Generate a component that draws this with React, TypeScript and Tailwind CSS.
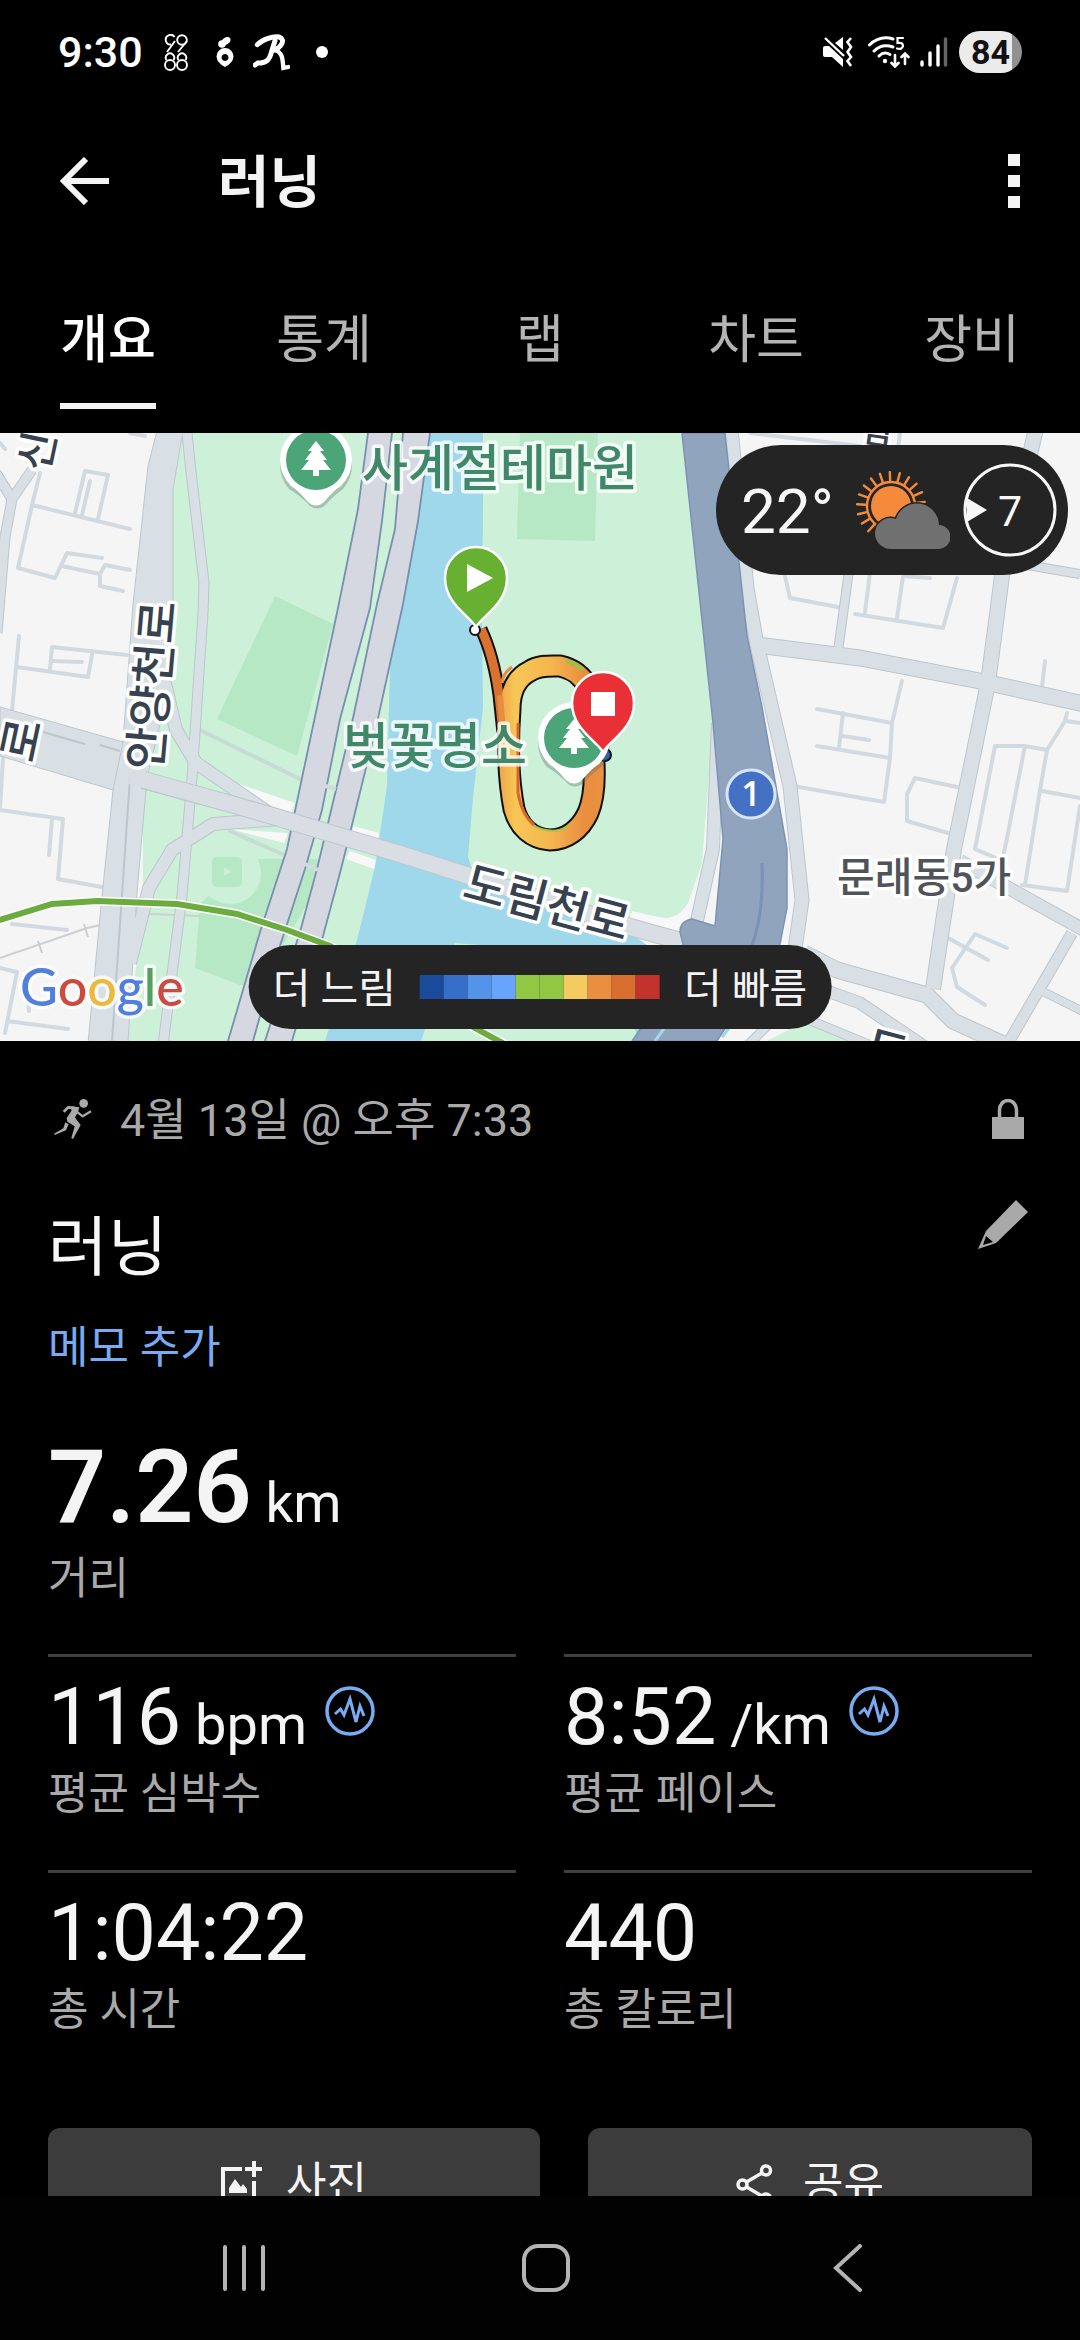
import type { ReactNode } from "react";

const MUTED = "#a9a9a9";

/* ---------- status bar ---------- */

function NinesEightsIcon() {
  return (
    <svg width="24" height="37" viewBox="0 0 24 37" fill="none" stroke="white" strokeWidth="1.900">
      <path d="M10.500 3 A4.800 4.800 0 1 0 7 10.500 M11 7 L3 18" />
      <circle cx="18" cy="6" r="4.800" />
      <path d="M23 7 L14 18" />
      <circle cx="6" cy="31" r="5" />
      <circle cx="18" cy="31" r="5" />
      <path d="M2.500 26 A4.200 4.200 0 1 1 9.500 26 M14.500 26 A4.200 4.200 0 1 1 21.500 26" />
    </svg>
  );
}

function SproutIcon() {
  return (
    <svg width="18" height="30" viewBox="0 0 18 30">
      <circle cx="6" cy="7" r="3.800" fill="white" />
      <ellipse cx="10" cy="4" rx="5" ry="3.500" fill="white" transform="rotate(-35 10 4)" />
      <path
        d="M9 11 A8.500 8.500 0 0 1 17.500 19.500 Q17 26 9 30 Q1 26 .5 19.500 A8.500 8.500 0 0 1 9 11 Z M9 17 a3.500 3.500 0 1 0 .01 0 Z"
        fill="white"
        fillRule="evenodd"
      />
    </svg>
  );
}

function RunnerLetterIcon() {
  return (
    <svg width="37" height="37" viewBox="0 0 111 111" fill="none" stroke="white" strokeLinecap="round">
      <path d="M13 32 C27 17 58 6 78 9 C100 16 84 42 62 48" strokeWidth="15" />
      <path d="M66 20 L56 52 C50 80 38 87 14 87 L6 93" strokeWidth="15" />
      <path d="M64 48 C90 54 89 78 91 102 L106 99" strokeWidth="13" />
    </svg>
  );
}

function MuteVibrateIcon() {
  return (
    <svg width="32" height="30" viewBox="0 0 32 30" fill="white">
      <path d="M0 11 Q0 9 2 9 H6 L20 22 V30 L9 20 H2 Q0 20 0 18 Z" />
      <path d="M12 6 L20 0 V13 Z" />
      <path d="M2 1 L21 19" stroke="white" strokeWidth="2.400" />
      <path d="M28 1 L24.500 5 L28 10 L24.500 15 L28 20 L24.500 24 L28 29" stroke="white" strokeWidth="2.600" fill="none" />
    </svg>
  );
}

function WifiIcon() {
  return (
    <svg width="42" height="32" viewBox="0 0 42 32" fill="none" stroke="white" strokeLinecap="round">
      <path d="M1.500 9 Q12 -1 25 3" strokeWidth="3" />
      <path d="M6 15 Q14 7 25 11" strokeWidth="3" />
      <path d="M11 20 Q16 15 22 18.500" strokeWidth="3" />
      <circle cx="17" cy="25" r="2.200" fill="white" stroke="none" />
      <path d="M35 2 H29.500 V7 Q35 6 35 10 Q34 14 29 12.500" strokeWidth="2.200" />
      <path d="M27 19 V30 M23.500 27 L27 30.500 L30.500 27" strokeWidth="2.600" />
      <path d="M37 28 V18 M33.500 21 L37 17.500 L40.500 21" strokeWidth="2.600" />
    </svg>
  );
}

function SignalIcon() {
  return (
    <svg width="28" height="30" viewBox="0 0 28 30" strokeLinecap="round" strokeWidth="3.400">
      <path d="M2 25 V28 M10 16 V28 M18 9 V28" stroke="white" />
      <path d="M25.500 2 V28" stroke="#666" />
    </svg>
  );
}

function StatusBar() {
  return (
    <div className="flex h-[104px] shrink-0 items-center px-[58px] text-white">
      <span className="w-[106px] text-[43px] font-medium leading-none">9:30</span>
      <NinesEightsIcon />
      <div className="w-[28px]" />
      <SproutIcon />
      <div className="w-[19px]" />
      <RunnerLetterIcon />
      <span className="ml-[26px] size-3 rounded-full bg-white" />
      <div className="ml-auto flex items-center">
        <MuteVibrateIcon />
        <div className="w-[13px]" />
        <WifiIcon />
        <div className="w-[10px]" />
        <SignalIcon />
        <span className="ml-[11px] flex h-[42px] w-[63px] items-center justify-center rounded-[21px] bg-[linear-gradient(to_right,#ebebeb_84%,#919191_84%)] text-[34px] font-bold leading-none text-[#111]">
          84
        </span>
      </div>
    </div>
  );
}

/* ---------- header ---------- */

function AppBar() {
  return (
    <header className="flex h-[154px] shrink-0 items-center px-[60px]">
      <button aria-label="뒤로" className="w-[158px]">
        <svg width="49" height="48" viewBox="0 0 49 48" fill="none" stroke="#f4f4f4" strokeWidth="6">
          <path d="M49 24 H5 M26 2 L4 24 L26 46" />
        </svg>
      </button>
      <h1 className="pt-1 text-[56px] font-semibold leading-[64px] text-[#f4f4f4]">러닝</h1>
      <button aria-label="더보기" className="ml-auto flex flex-col gap-[9px]">
        <span className="size-3 bg-[#f4f4f4]" />
        <span className="size-3 bg-[#f4f4f4]" />
        <span className="size-3 bg-[#f4f4f4]" />
      </button>
    </header>
  );
}

const tabs = ["개요", "통계", "랩", "차트", "장비"];

function Tabs() {
  return (
    <nav className="grid shrink-0 grid-cols-5 pb-6 pt-[51px]">
      {tabs.map((t, i) => (
        <button key={t} className="flex flex-col items-center">
          <span
            className={
              i === 0
                ? "border-b-[6px] border-[#f4f4f4] pb-[30px] text-[52px] font-medium leading-[64px] text-white"
                : "border-b-[6px] border-transparent pb-[30px] text-[52px] leading-[64px] text-[#b4b4b4]"
            }
          >
            {t}
          </span>
        </button>
      ))}
    </nav>
  );
}

/* ---------- map ---------- */

const smallStreets = [
  "M40 40 L32 72 L18 135 L55 145 L67 120 L102 125",
  "M32 72 L130 96",
  "M75 80 L85 38 L108 42 L98 86 M90 48 L82 82",
  "M62 133 L100 141 L105 132 L130 137 M100 141 V153 L123 158",
  "M19 203 L12 278 M17 234 L88 244 L92 222 M50 236 L52 214 L127 222 M53 228 L82 229",
  "M3 325 L0 377 L63 386 L58 446 L102 454 M52 386 L49 422",
  "M12 491 L67 497 M0 535 L17 539 L5 600 M7 588 L68 596",
  "M130 0 L145 3 M0 10 L5 16 M28 566 L29 578",
  "M785 143 L790 165 L843 175",
  "M855 181 L943 195 L957 145 M870 140 L865 179 M903 143 L897 185 M903 143 L930 145",
  "M817 276 L892 290 M902 248 L892 290 L890 325 L884 369 L793 353 M817 313 L890 325 M843 280 L839 315 M843 303 L869 307",
  "M957 354 L915 345 L907 361 V388 L948 400",
  "M1045 228 L1042 254",
  "M1067 280 L1065 288 L1047 317 L1040 357 L1025 452 M1065 288 L1080 290 M1047 317 L1025 313 L995 313 L975 416 L1003 428 M1025 313 L1003 425 M1022 452 L1067 458 L1080 373 M1042 358 L1080 365",
  "M948 505 L988 527 M1007 515 L975 501 L952 535 L957 554 L985 572",
  "M750 0 L860 13 M900 0 L895 40",
];

const edge = "#bcc6cd";
const road = "#d9e0e5";

const arterials: { d: string; w: number }[] = [
  { d: "M32 37 L12 66 L-4 40 M12 66 L5 104 L-3 200", w: 9 },
  { d: "M187 0 L190 30 L204 150 L203 180 L192 345 L182 463 L163 612", w: 9 },
  { d: "M165 250 L176 297 L196 330 L275 384", w: 12 },
  { d: "M280 386 L213 391 L172 417 L149 455 L130 530", w: 12 },
  { d: "M850 130 L838 218", w: 8 },
  { d: "M1036 -4 L1003 135 L988 250 L954 416 L933 556", w: 14 },
  { d: "M1003 128 L1080 141", w: 8 },
  { d: "M757 212 L860 225 L980 248 L1084 271", w: 15 },
  { d: "M804 520 L837 537 L927 562 L953 588 L1010 614", w: 15 },
  { d: "M800 548 L860 570 L925 614", w: 11 },
  { d: "M780 575 L870 612 M740 620 L775 585", w: 8 },
  { d: "M960 428 L1084 497", w: 12 },
  { d: "M1072 500 L1007 612", w: 10 },
  { d: "M1042 558 L1084 579", w: 7 },
  { d: "M731 -4 L747 155 L757 212 L790 353 L802 467 L793 530", w: 13 },
  { d: "M718 290 L713 416 L696 492", w: 12 },
];

const highwayA = "M368 0 L358 76 L338 175 L302 345 L287 416 L260 499 L228 608";
const highwayAEast = "M392 0 L382 88 L370 175 L340 286 L322 377 L305 436 L278 519 L253 608";
const highwayB = "M403 0 L395 96 L377 171 L352 290 L335 361 L317 436 L300 499 L265 608";
const highwayBEast = "M430 0 L418 88 L403 171 L377 290 L350 400 L340 440 L323 503 L292 608";

const routeLoop =
  "M510 276 C510 256 518 244 530 238 C539 232 550 233 560 233 C574 236 582 243 588 254 C593 274 594 300 594 330 C595 350 594 366 588 380 C580 397 566 407 550 407 C532 406 519 394 514 376 C509 350 507 315 510 276 Z";
const routeTail = "M481 196 C490 215 496 240 499 262 L503 300";

function MapPin({ x, y, fill, children }: { x: number; y: number; fill: string; children: ReactNode }) {
  return (
    <g transform={`translate(${x} ${y})`}>
      <path d="M0 47 C-6 36 -31 24 -31 -2 A31 31 0 0 1 31 -2 C31 24 6 36 0 47 Z" fill={fill} stroke="white" strokeWidth="2.500" />
      {children}
    </g>
  );
}

function ParkMarker({ x, y }: { x: number; y: number }) {
  return (
    <g transform={`translate(${x} ${y})`}>
      <path d="M-27 26 A36 36 0 1 1 27 26 Q20 31 13 38 Q4 50 -6 43 Q-14 34 -27 26 Z" fill="#5b6b64" opacity=".35" transform="translate(0 3)" />
      <path d="M-25 26 A36 36 0 1 1 25 26 Q17 31 9 41 Q0 50 -9 41 Q-17 31 -25 26 Z" fill="white" />
      <circle r="30" fill="#4ba578" />
      <path d="M0 -19 L8 -9 H4 L11 0 H7 L15 10 H3 V16 H-3 V10 H-15 L-7 0 H-11 L-4 -9 H-8 Z" fill="white" />
    </g>
  );
}

function MapDrawing() {
  return (
    <svg
      className="absolute inset-0 size-full"
      viewBox="0 0 1080 608"
      preserveAspectRatio="xMidYMid slice"
      fill="none"
      role="img"
      aria-label="러닝 경로 지도"
    >
      <defs>
        <linearGradient id="pace" x1="500" y1="0" x2="605" y2="0" gradientUnits="userSpaceOnUse">
          <stop offset="0" stopColor="#f0a84a" />
          <stop offset=".15" stopColor="#f7c756" />
          <stop offset=".5" stopColor="#f4b44e" />
          <stop offset=".8" stopColor="#e98f40" />
          <stop offset="1" stopColor="#e8913f" />
        </linearGradient>
      </defs>
      <rect width="1080" height="608" fill="#f6f5f6" />

      <path d="M183 0 H683 L713 290 L702 430 L688 470 Q680 484 667 485 L630 480 L640 608 H128 L143 470 V345 L173 200 V56 Z" fill="#ccf0d8" />
      <g fill="#b6e8c5">
        <path d="M275 163 L333 191 L297 323 L217 286 Z" />
        <path d="M520 0 H598 L595 108 L517 106 Z" />
        <path d="M250 426 H335 L258 552 H240 L195 535 L200 471 Z" />
      </g>
      <circle cx="230" cy="440" r="31" fill="#ccf0d8" />
      <rect x="212" y="424" width="30" height="30" rx="5" fill="#b6e8c5" />
      <path d="M224 434 L231 439 L224 443 Z" fill="#ccf0d8" />
      <path d="M767 608 L810 586 L857 608 Z" fill="#ccf0d8" />

      <path
        d="M430 0 H483 V70 L482 195 L483 274 L473 365 L468 424 L475 446 L630 500 L672 530 L655 608 H640 L610 540 L480 512 L455 510 L421 608 H325 L357 507 L375 434 L387 353 L390 234 L403 171 Z"
        fill="#9fd8ea"
      />
      <path d="M233 349 L295 370 L290 383 L262 377 Z M230 396 L288 400 L284 410 Z M354 393 L379 400 L377 412 L350 405 Z M350 418 L376 427 L374 436 L346 426 Z" fill="#f8f8f8" />
      <path d="M632 478 L665 486 L690 478 L684 500 L630 490 Z" fill="#f8f8f8" />
      <path d="M715 290 L726 420 L712 495 L700 490 L712 420 Z" fill="#f4f4f6" />

      <g stroke="#d2dae1" strokeWidth="4" strokeLinecap="round" strokeLinejoin="round">
        {smallStreets.map((d) => (
          <path key={d} d={d} />
        ))}
        <path d="M200 297 L302 347 M230 398 L282 421" stroke="#c6dcd4" />
      </g>
      <path d="M0 525 L87 495 L150 481 L200 483 M38 508 L42 520 M84 491 L88 504" stroke="#ccd0d3" strokeWidth="2" />

      {arterials.map((a) => (
        <path key={a.d} d={a.d} stroke={edge} strokeWidth={a.w + 2} strokeLinejoin="round" />
      ))}
      <path d="M0 274 L123 309 L147 339 L143 357 L113 357 L0 323 Z" fill={road} stroke={edge} />
      <path d="M157 -2 L148 33 L133 171 L123 309 L113 357 L102 463 L88 610 H128 L137 460 L147 345 L170 250 L173 167 V56 L183 -2 Z" fill={road} stroke={edge} />
      <path d="M130 345 L112 608 M43 299 L85 311 M100 312 L120 318" stroke={edge} strokeWidth="2" />
      {arterials.map((a) => (
        <path key={a.d} d={a.d} stroke={road} strokeWidth={a.w} strokeLinejoin="round" />
      ))}

      <path d={`${highwayA} H253 L278 519 L305 436 L322 377 L340 286 L370 175 L382 88 L392 0 Z`} fill="#d5d8e1" />
      <path d={`${highwayB} H292 L323 503 L340 440 L350 400 L377 290 L403 171 L418 88 L430 0 Z`} fill="#d5d8e1" />
      <path d={`${highwayA} ${highwayAEast} ${highwayB} ${highwayBEast}`} stroke="#7690ae" strokeWidth="1.800" />
      <path d="M322 352 L336 356 M305 431 L318 437" stroke="#d2dae1" strokeWidth="4" />

      <path d="M143 347 L231 371 L276 384 L400 421 L630 494 L684 509" stroke={edge} strokeWidth="18" />
      <path d="M130 343 L231 371 L276 384 L400 421 L630 494 L684 509" stroke="#d9dee4" strokeWidth="16" />

      <path
        d="M682 0 L713 290 L723 406 L715 493 L692 486 Q680 488 680 499 L684 515 L672 550 L632 608 H717 L780 511 L787 475 V416 L762 274 L747 203 L725 0 Z"
        fill="#90a4be"
        stroke="#7b93b2"
        strokeWidth="1.500"
      />
      <path d="M762 430 Q764 480 752 512" stroke="#7a92b3" strokeWidth="3" />
      <path d="M655 608 L668 590 M722 604 L730 594" stroke="#9fd8ea" strokeWidth="3" />

      <path d="M-4 488 L52 471 L97 468 L177 471 L237 481 L287 497 L330 513 L473 594 L510 614" stroke="white" strokeWidth="9" />
      <path d="M-4 488 L52 471 L97 468 L177 471 L237 481 L287 497 L330 513 L473 594 L510 614" stroke="#6cab3f" strokeWidth="6" />

      <g strokeLinejoin="round">
        <path d={routeTail} stroke="#111" strokeWidth="13" />
        <path d={routeLoop} stroke="#111" strokeWidth="23" />
        <path d={routeTail} stroke="#d9712f" strokeWidth="9" />
        <path d={routeLoop} stroke="url(#pace)" strokeWidth="19" />
        <path d="M518 290 L518 360 Q522 382 534 392" stroke="#d9652f" strokeWidth="3" />
        <path d="M534 393 Q552 402 568 394" stroke="#a9c04a" strokeWidth="2" />
        <path d="M566 227 L583 236" stroke="#9cbf48" strokeWidth="4" />
        <path d="M502 250 Q503 240 512 234" stroke="#e88c3e" strokeWidth="3" />
        <path d="M500 262 L503 300" stroke="#e88c3e" strokeWidth="6" />
      </g>
      <circle cx="475" cy="197" r="5" fill="white" stroke="#111" strokeWidth="2" />
      <circle cx="605" cy="322" r="6" fill="#2b61b4" stroke="#111" strokeWidth="2" />

      <ParkMarker x={316} y={27} />
      <ParkMarker x={574} y={305} />

      <g
        stroke="white"
        strokeWidth="7"
        strokeLinejoin="round"
        paintOrder="stroke"
        className="font-['Roboto','Noto_Sans_CJK_KR',sans-serif] font-medium"
      >
        <g fill="#3f8868" strokeOpacity=".8" fontSize="50">
          <text x="362" y="53">사계절테마원</text>
          <text x="343" y="331">벚꽃명소</text>
        </g>
        <g fill="#36424f" fontSize="46">
          <text transform="translate(161 338) rotate(-85)">안양천로</text>
          <text transform="translate(461 464) rotate(15)">도림천로</text>
          <text transform="translate(33 331) rotate(-78)">로</text>
          <text transform="translate(48 40) rotate(-78)" fontSize="42">신</text>
          <text transform="translate(862 628) rotate(15)">도</text>
          <text transform="translate(860 8) rotate(8)" fontSize="34">림</text>
        </g>
        <text x="837" y="459" fontSize="41" fill="#505459">문래동5가</text>
      </g>

      <circle cx="751" cy="361" r="24" fill="#4471c4" stroke="#d8e4f8" strokeWidth="3" />
      <text x="751" y="373" fontSize="34" textAnchor="middle" fill="white" className="font-['Open_Sans',sans-serif] font-semibold">
        1
      </text>

      <MapPin x={476} y={147} fill="#67b032">
        <path d="M-9 -16 L17 -2 L-9 12 Z" fill="white" />
      </MapPin>
      <MapPin x={603} y={272} fill="#ea3037">
        <rect x="-12" y="-13" width="24" height="24" fill="white" />
      </MapPin>

      <text
        x="20"
        y="573"
        fontSize="52"
        stroke="white"
        strokeOpacity=".8"
        strokeWidth="7"
        strokeLinejoin="round"
        paintOrder="stroke"
        className="font-['Lato',sans-serif] font-medium"
      >
        <tspan fill="#527ee0">G</tspan>
        <tspan fill="#cb4b40">o</tspan>
        <tspan fill="#eab93d">o</tspan>
        <tspan fill="#527ee0">g</tspan>
        <tspan fill="#55a05e">l</tspan>
        <tspan fill="#cb4b40">e</tspan>
      </text>
    </svg>
  );
}

const rays = Array.from({ length: 14 }, (_, i) => 7 + i * 17);

function WeatherIcon() {
  return (
    <svg width="94" height="78" viewBox="0 0 94 78" fill="none">
      {rays.map((a) => {
        const c = Math.cos((a * Math.PI) / 180);
        const s = -Math.sin((a * Math.PI) / 180);
        return (
          <line
            key={a}
            x1={35 + 25 * c}
            y1={35 + 25 * s}
            x2={35 + 34 * c}
            y2={35 + 34 * s}
            stroke="#f58a3c"
            strokeWidth="2.400"
            strokeLinecap="round"
          />
        );
      })}
      <circle cx="35" cy="35" r="24" stroke="#f58a3c" strokeWidth="2.400" />
      <circle cx="35" cy="35" r="20" fill="#f58a3c" />
      <path
        d="M34 78 A15.500 15.500 0 1 1 40 48 A22 22 0 0 1 83 54 A12 12 0 0 1 82 78 Z"
        fill="#707070"
        stroke="#242424"
        strokeWidth="3"
        paintOrder="stroke"
      />
    </svg>
  );
}

function WindDial() {
  return (
    <svg width="94" height="94" viewBox="0 0 94 94" fill="none">
      <circle cx="47" cy="47" r="45" stroke="#f7f7f7" strokeWidth="3" />
      <path d="M4 35 L24 47 L4 59 Z" fill="#f7f7f7" />
      <text x="47" y="63" fontSize="43" textAnchor="middle" fill="#f7f7f7">
        7
      </text>
    </svg>
  );
}

const paceScale = [
  "bg-[#1c4a9a]",
  "bg-[#356fc8]",
  "bg-[#5393ea]",
  "bg-[#66a5fb]",
  "bg-[#90c843]",
  "bg-[#90c843]",
  "bg-[#f3cb60]",
  "bg-[#ea8e40]",
  "bg-[#d96f2e]",
  "bg-[#c1332c]",
];

function MapPanel() {
  return (
    <section className="relative h-[608px] shrink-0 overflow-hidden">
      <MapDrawing />
      <div className="absolute right-3 top-3 flex h-[130px] items-center rounded-full bg-[#242424] pl-[25px] pr-[11px] text-[#f7f7f7]">
        <span className="w-[115px] pt-1 text-[62px] leading-none">22°</span>
        <WeatherIcon />
        <div className="w-[13px]" />
        <WindDial />
      </div>
      <div className="absolute bottom-3 left-1/2 flex h-[84px] -translate-x-1/2 items-center gap-6 whitespace-nowrap rounded-full bg-[#242424] px-6 text-[41px] text-[#f4f4f4]">
        <span className="pt-1 leading-none">더 느림</span>
        <div className="flex">
          {paceScale.map((c, i) => (
            <span key={i} className={`h-6 w-6 ${c}`} />
          ))}
        </div>
        <span className="pt-1 leading-none">더 빠름</span>
      </div>
    </section>
  );
}

/* ---------- details ---------- */

function RunningIcon() {
  return (
    <svg width="38" height="40" viewBox="0 0 114 120" fill="none" stroke={MUTED} strokeLinejoin="round">
      <circle cx="89" cy="13" r="13" fill={MUTED} stroke="none" />
      <path d="M29 38 L43 25 L62 27" strokeWidth="8" />
      <path d="M52 22 L76 25 L72 40 L60 60 L38 58 L52 36 Z" fill={MUTED} stroke="none" />
      <path d="M68 38 L86 52 L111 37" strokeWidth="7" />
      <path d="M38 56 L60 52 L80 78 L57 120 L52 117 L62 82 L40 68 Z" fill={MUTED} stroke="none" />
      <path d="M34 70 L44 76 L36 94 L2 108 L0 104 L28 88 Z" fill={MUTED} stroke="none" />
    </svg>
  );
}

function LockIcon() {
  return (
    <svg width="32" height="40" viewBox="0 0 32 40" fill="none" role="img" aria-label="비공개">
      <path d="M7.500 20 V11 A8.500 9.500 0 0 1 24.500 11 V20" stroke={MUTED} strokeWidth="3.500" />
      <rect y="18" width="32" height="22" fill={MUTED} />
    </svg>
  );
}

function PencilIcon() {
  return (
    <svg width="50" height="49" viewBox="0 0 50 49">
      <path d="M38 0 L50 12 L18 43 L0 49 L8 31 Z M8 36 L15 42 L5 45 Z" fill={MUTED} fillRule="evenodd" />
    </svg>
  );
}

function PulseIcon() {
  return (
    <svg width="50" height="50" viewBox="0 0 50 50" fill="none" stroke="#78abf0">
      <circle cx="25" cy="25" r="23" strokeWidth="3.500" />
      <path d="M10 28 L15.500 23 L19 29 L25 13 L31 36 L35 20 L39 30" strokeWidth="3" />
    </svg>
  );
}

function Stat({ value, unit, label, pulse }: { value: string; unit?: string; label: string; pulse?: boolean }) {
  return (
    <div className="h-[216px] border-t-[3px] border-[#404040] pt-[18px]">
      <div className="flex text-[#f4f4f4]">
        <p className="text-[79px] leading-[84px]">
          {value}
          {unit && <span className="text-[56px] leading-none"> {unit}</span>}
        </p>
        {pulse && (
          <button aria-label={`${label} 그래프`} className="ml-[18px] mt-[11px] self-start">
            <PulseIcon />
          </button>
        )}
      </div>
      <p className="mt-[3px] text-[44px] leading-[64px] text-[#a9a9a9]">{label}</p>
    </div>
  );
}

function AddPhotoIcon() {
  return (
    <svg width="41" height="46" viewBox="0 0 41 46" fill="#f4f4f4">
      <path d="M0 6 H21 V10 H4 V42 H31 V20 H35 V46 H0 Z" />
      <path d="M31 0 H35 V6 H41 V10 H35 V16 H31 V10 H24 V6 H31 Z" />
      <path d="M8 32 V27 L14 18 L20 26 L22 23 L26 28 V32 Z" />
    </svg>
  );
}

function ShareNodesIcon() {
  return (
    <svg width="37" height="41" viewBox="0 0 37 41" fill="none" stroke="#f4f4f4" strokeWidth="3.500">
      <circle cx="30" cy="6.500" r="4.500" />
      <circle cx="6.500" cy="20.500" r="4.500" />
      <circle cx="30" cy="34.500" r="4.500" />
      <path d="M10.500 18 L26 9 M10.500 23 L26 32" />
    </svg>
  );
}

function Details() {
  return (
    <main className="px-12 pt-[54px]">
      <div className="flex h-[48px] items-center text-[#a9a9a9]">
        <div className="w-[72px] pl-[6px]">
          <RunningIcon />
        </div>
        <p className="pt-1 text-[45px] leading-[48px]">4월 13일 @ 오후 7:33</p>
        <div className="ml-auto pr-2">
          <LockIcon />
        </div>
      </div>

      <div className="mt-[65px] flex h-[72px] justify-between">
        <h2 className="pt-1 text-[65px] leading-[72px] text-[#f7f7f7]">러닝</h2>
        <button aria-label="이름 편집" className="-mt-2 mr-1 self-start">
          <PencilIcon />
        </button>
      </div>

      <button className="mt-10 block text-[44px] leading-[56px] text-[#78abf0]">메모 추가</button>

      <p className="mt-[51px] text-[102px] font-semibold leading-[120px] text-[#f4f4f4]">
        7.26<span className="text-[55px] font-normal leading-none"> km</span>
      </p>
      <p className="mb-[43px] text-[44px] leading-[64px] text-[#a9a9a9]">거리</p>

      <div className="grid grid-cols-2 gap-x-12">
        <Stat value="116" unit="bpm" label="평균 심박수" pulse />
        <Stat value="8:52" unit="/km" label="평균 페이스" pulse />
        <Stat value="1:04:22" label="총 시간" />
        <Stat value="440" label="총 칼로리" />
      </div>

      <div className="mt-[42px] grid grid-cols-[492fr_444fr] gap-12 text-[44px] text-[#f4f4f4]">
        <button className="flex h-[112px] items-center justify-center gap-6 rounded-[12px] bg-[#3c3c3c]">
          <AddPhotoIcon />
          사진
        </button>
        <button className="flex h-[112px] items-center justify-center gap-[30px] rounded-[12px] bg-[#3c3c3c]">
          <ShareNodesIcon />
          공유
        </button>
      </div>
    </main>
  );
}

function SystemNav() {
  return (
    <nav className="grid h-36 shrink-0 grid-cols-3 place-items-center bg-[#020202] pl-[93px] pr-[81px]">
      <button aria-label="최근 앱">
        <svg width="44" height="48" viewBox="0 0 44 48" stroke="#b4b4b4" strokeWidth="4" strokeLinecap="round">
          <path d="M3 3 V45 M22 3 V45 M41 3 V45" />
        </svg>
      </button>
      <button aria-label="홈">
        <svg width="48" height="48" viewBox="0 0 48 48" fill="none" stroke="#b4b4b4" strokeWidth="4">
          <rect x="2" y="2" width="44" height="44" rx="14" />
        </svg>
      </button>
      <button aria-label="이전">
        <svg width="30" height="48" viewBox="0 0 30 48" fill="none" stroke="#b4b4b4" strokeWidth="4" strokeLinecap="round">
          <path d="M27 2 L3 24 L27 46" />
        </svg>
      </button>
    </nav>
  );
}

export default function App() {
  return (
    <div className="flex h-screen flex-col bg-black font-['Roboto','Noto_Sans_CJK_KR',sans-serif]">
      <StatusBar />
      <AppBar />
      <Tabs />
      <div className="min-h-0 flex-1 overflow-hidden">
        <MapPanel />
        <Details />
      </div>
      <SystemNav />
    </div>
  );
}
